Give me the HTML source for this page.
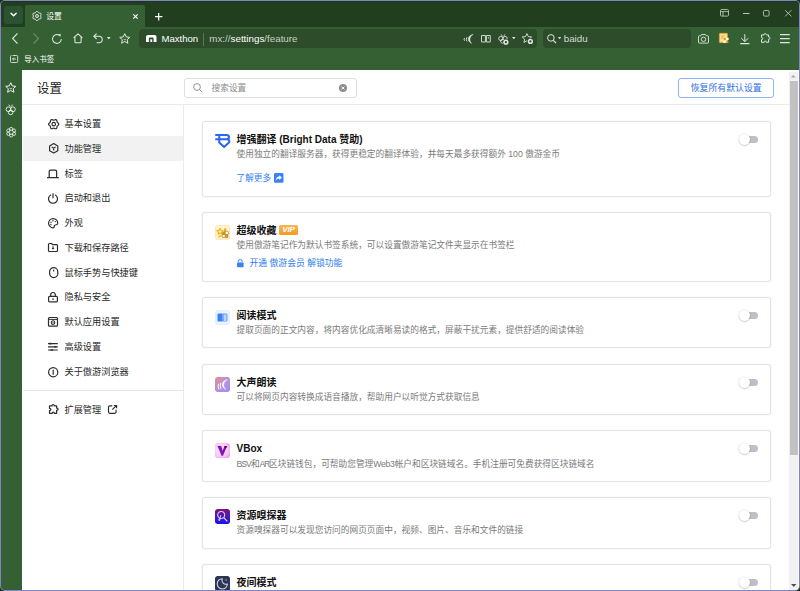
<!DOCTYPE html>
<html lang="zh-CN">
<head>
<meta charset="utf-8">
<title>设置</title>
<style>
*{box-sizing:border-box;margin:0;padding:0}
html,body{width:800px;height:591px;overflow:hidden;background:#12300c}
body{font-family:"Liberation Sans","Noto Sans CJK SC",sans-serif;color:#222;position:relative}
.abs{position:absolute}
svg{position:absolute;overflow:visible;fill:none}
#frame{position:absolute;left:0;top:0;width:800px;height:591px;background:#8384c6;border-radius:5px}
#win{position:absolute;left:1px;top:1px;width:798px;height:589px;background:#356033;border-radius:4px;overflow:hidden}
#tabbar{position:absolute;left:0;top:0;width:798px;height:26px;background:#213f1f;box-shadow:inset 0 1px 0 #1b3714}
#ddbtn{position:absolute;left:3px;top:5px;width:19px;height:18px;border-radius:3px;background:#2b5332}
#tab{position:absolute;left:24px;top:4px;width:120px;height:23px;background:#356033;border-radius:2px 2px 0 0}
.t{position:absolute;white-space:nowrap;line-height:1}
.w{color:#fff}
#addr{position:absolute;left:138px;top:28px;width:398px;height:19px;border-radius:4px;background:#2c4c2a}
#srch{position:absolute;left:542px;top:28px;width:148px;height:19px;border-radius:4px;background:#2c4c2a}
#page{position:absolute;left:21px;top:69px;width:777px;height:520px;background:#fff;overflow:hidden}
#sbtrack{position:absolute;left:767px;top:2px;width:9px;height:518px;background:#f1f1f1}
#sbthumb{position:absolute;left:1px;top:9px;width:8px;height:374px;background:#c1c1c1}
.nav{position:absolute;left:42.5px;font-size:9.2px;color:#2a2a2a;white-space:nowrap;line-height:12px;height:12px}
.card{position:absolute;left:180px;width:569px;border:1px solid #e4e4e4;border-radius:3px;background:#fff;box-shadow:0 0 1.5px rgba(0,0,0,.10)}
.ct{position:absolute;left:33.5px;font-size:10px;font-weight:bold;color:#111;white-space:nowrap;line-height:14px;height:14px}
.cd{position:absolute;left:33.5px;font-size:8.7px;color:#7a7a7a;white-space:nowrap;line-height:12px;height:12px}
.cl{position:absolute;left:33.5px;font-size:8.65px;color:#2f7cf0;white-space:nowrap;line-height:12px;height:12px}
.tg{position:absolute;left:538.5px;width:16.2px;height:7px;border-radius:4px;background:#bcc0c7}
.tg i{position:absolute;left:-2.8px;top:-1.9px;width:10.8px;height:10.8px;border-radius:50%;background:#fff;box-shadow:0 0.4px 1.6px rgba(0,0,0,.38)}
.ic{position:absolute;left:12px;width:15px;height:15px;border-radius:2.5px;overflow:hidden}
</style>
</head>
<body>
<div id="frame"></div>
<div id="win">
<div id="tabbar"></div><div id="ddbtn"></div><div id="tab"></div>
<svg style="left:8.5px;top:11px" width="8" height="6" viewBox="0 0 8 6" ><path d="M1 1.2 L3.6 3.8 L6.2 1.2" stroke="#fff" stroke-width="1.4" stroke-linecap="round" stroke-linejoin="round"/></svg>
<svg style="left:30.9px;top:10px" width="10" height="10" viewBox="0 0 10 10" ><path d="M8.60 5.00 L8.65 5.32 L8.79 5.67 L8.96 6.06 L9.09 6.49 L9.11 6.92 L8.98 7.30 L8.71 7.60 L8.33 7.80 L7.90 7.90 L7.47 7.95 L7.10 8.00 L6.80 8.12 L6.55 8.32 L6.32 8.62 L6.06 8.96 L5.76 9.28 L5.40 9.52 L5.00 9.60 L4.60 9.52 L4.24 9.28 L3.94 8.96 L3.68 8.62 L3.45 8.32 L3.20 8.12 L2.90 8.00 L2.53 7.95 L2.10 7.90 L1.67 7.80 L1.29 7.60 L1.02 7.30 L0.89 6.92 L0.91 6.49 L1.04 6.06 L1.21 5.67 L1.35 5.32 L1.40 5.00 L1.35 4.68 L1.21 4.33 L1.04 3.94 L0.91 3.51 L0.89 3.08 L1.02 2.70 L1.29 2.40 L1.67 2.20 L2.10 2.10 L2.53 2.05 L2.90 2.00 L3.20 1.88 L3.45 1.68 L3.68 1.38 L3.94 1.04 L4.24 0.72 L4.60 0.48 L5.00 0.40 L5.40 0.48 L5.76 0.72 L6.06 1.04 L6.32 1.38 L6.55 1.68 L6.80 1.88 L7.10 2.00 L7.47 2.05 L7.90 2.10 L8.33 2.20 L8.71 2.40 L8.98 2.70 L9.11 3.08 L9.09 3.51 L8.96 3.94 L8.79 4.33 L8.65 4.68 Z" stroke="#f4f7f4" stroke-width="1" stroke-linejoin="round"/><circle cx="5" cy="5" r="1.45" stroke="#f4f7f4" stroke-width="0.95"/></svg>
<div class="t w" style="left:45.3px;top:11.5px;font-size:7.8px">设置</div>
<svg style="left:132.2px;top:12.7px" width="5" height="5" viewBox="0 0 5 5" ><path d="M0.3 0.3 L4.7 4.7 M4.7 0.3 L0.3 4.7" stroke="#fff" stroke-width="1.2"/></svg>
<svg style="left:153.8px;top:11.5px" width="7.4" height="7.4" viewBox="0 0 7.4 7.4" ><path d="M3.7 0 V7.4 M0 3.7 H7.4" stroke="#fff" stroke-width="1.2"/></svg>
<svg style="left:719.2px;top:8.4px" width="9" height="7.6" viewBox="0 0 9 7.6" ><rect x="0.5" y="0.5" width="8" height="6.6" rx="1" stroke="#b9c6b8" stroke-width="0.9"/><path d="M0.5 2.6 H8.5 M3 2.6 V7" stroke="#b9c6b8" stroke-width="0.9"/></svg>
<svg style="left:741.5px;top:12.2px" width="6.5" height="1" viewBox="0 0 6.5 1" ><path d="M0 0.5 H6.5" stroke="#b9c6b8" stroke-width="1"/></svg>
<svg style="left:762.2px;top:9.4px" width="6.6" height="6.6" viewBox="0 0 6.6 6.6" ><rect x="0.5" y="0.5" width="5.6" height="5.6" rx="1.2" stroke="#b9c6b8" stroke-width="0.9"/></svg>
<svg style="left:784px;top:9.4px" width="6.6" height="6.6" viewBox="0 0 6.6 6.6" ><path d="M0.2 0.2 L6.4 6.4 M6.4 0.2 L0.2 6.4" stroke="#b9c6b8" stroke-width="0.9"/></svg>
<svg style="left:11px;top:32px" width="6" height="11" viewBox="0 0 6 11" ><path d="M5.5 0.3 L0.6 5.5 L5.5 10.7" stroke="#dfe7de" stroke-width="1.1"/></svg>
<svg style="left:32px;top:32px" width="6" height="11" viewBox="0 0 6 11" ><path d="M0.5 0.3 L5.4 5.5 L0.5 10.7" stroke="#6e906c" stroke-width="1.1"/></svg>
<svg style="left:51px;top:32.5px" width="10" height="10" viewBox="0 0 10 10" ><path d="M9.3 5 A4.4 4.4 0 1 1 7.3 1.3" stroke="#dfe7de" stroke-width="1.05"/><path d="M6.2 0 L9 0.3 L8.2 3 Z" fill="#dfe7de"/></svg>
<svg style="left:72px;top:32.3px" width="10" height="10.4" viewBox="0 0 10 10.4" ><path d="M0.6 5 L5 0.8 L9.4 5 M1.9 4.2 V8.8 Q1.9 9.8 2.9 9.8 H7.1 Q8.1 9.8 8.1 8.8 V4.2" stroke="#dfe7de" stroke-width="1.05" stroke-linejoin="round"/></svg>
<svg style="left:92px;top:32px" width="10" height="10.5" viewBox="0 0 10 10.5" ><path d="M3.6 0.6 L0.8 3.3 L3.6 6 M0.9 3.3 H6 A3.2 3.2 0 0 1 6 9.7 H3.6" stroke="#dfe7de" stroke-width="1.05"/></svg>
<svg style="left:106.2px;top:35.8px" width="3.6" height="2.4" viewBox="0 0 3.6 2.4" ><path d="M0 0 H3.6 L1.8 2.4 Z" fill="#dfe7de"/></svg>
<svg style="left:117.9px;top:31.7px" width="11.5" height="11" viewBox="0 0 11.5 11" ><path d="M5.75 0.7 L7.25 3.95 L10.8 4.35 L8.15 6.75 L8.9 10.25 L5.75 8.45 L2.6 10.25 L3.35 6.75 L0.7 4.35 L4.25 3.95 Z" stroke="#dfe7de" stroke-width="1" stroke-linejoin="round"/><path d="M4.6 6.3 Q5.75 7.2 6.9 6.3" stroke="#dfe7de" stroke-width="0.8"/></svg>
<div id="addr"></div>
<svg style="left:144.5px;top:33.9px" width="10.5" height="7" viewBox="0 0 10.5 7" ><path d="M0 7 V2 Q0 0 2 0 H8.5 Q10.5 0 10.5 2 V7 H7.6 V3.4 Q7.6 2.6 6.8 2.6 H3.7 Q2.9 2.6 2.9 3.4 V7 Z" fill="#fff"/><rect x="4.3" y="4.3" width="1.9" height="2.7" fill="#fff"/></svg>
<div class="t w" style="left:160.4px;top:33.1px;font-size:9.6px">Maxthon</div>
<div class="abs" style="left:201.5px;top:31.5px;width:1px;height:13px;background:#567854"></div>
<div class="t" style="left:208.3px;top:33px;font-size:9.8px;color:#c5d2c4">mx://<span class="w">settings</span>/feature</div>
<svg style="left:461.5px;top:32.5px" width="10.5" height="9.5" viewBox="0 0 10.5 9.5" ><path d="M10.2 0.3 C4.6 1.6 3.4 6.8 8.6 9.4 C5.8 6.6 6.4 2.8 10.2 0.3 Z" fill="#dfe7de" stroke="#dfe7de" stroke-width="0.5" stroke-linejoin="round"/><path d="M4 3.2 Q2.4 5.2 4 7.4 M1.6 4 Q0.5 5.3 1.6 6.8" stroke="#dfe7de" stroke-width="0.9"/></svg>
<svg style="left:480.2px;top:33.5px" width="9.8" height="7.6" viewBox="0 0 9.8 7.6" ><path d="M0.5 0.5 H4.4 V7 H0.5 Z M5.4 0.5 H9.3 V7 H5.4 Z" stroke="#dfe7de" stroke-width="0.9" stroke-linejoin="round"/><path d="M7.35 2 V3.6" stroke="#dfe7de" stroke-width="0.8"/></svg>
<svg style="left:497px;top:32.5px" width="11" height="10.5" viewBox="0 0 11 10.5" ><path d="M3 0.3 L4.5 2.4 M7 0.3 L5.5 2.4" stroke="#dfe7de" stroke-width="0.8"/><circle cx="2.8" cy="4.5" r="2.1" stroke="#dfe7de" stroke-width="0.9"/><circle cx="7.1" cy="4.5" r="2.1" stroke="#dfe7de" stroke-width="0.9"/><circle cx="4.7" cy="7.2" r="2" stroke="#dfe7de" stroke-width="0.9"/><circle cx="7.9" cy="8.2" r="3.2" fill="#2c4c2a"/><circle cx="7.9" cy="8.2" r="2.6" fill="#dfe7de"/><circle cx="7.9" cy="8.2" r="1.1" fill="#2c4c2a"/></svg>
<svg style="left:511.1px;top:36.1px" width="3.6" height="2.2" viewBox="0 0 3.6 2.2" ><path d="M0 0 H3.6 L1.8 2.2 Z" fill="#dfe7de"/></svg>
<svg style="left:521px;top:32.3px" width="11" height="10.7" viewBox="0 0 11 10.7" ><path d="M4.9 0.6 L6.3 3.6 L9.6 4 L7.2 6.2 L7.85 9.45 L4.9 7.8 L1.95 9.45 L2.6 6.2 L0.2 4 L3.5 3.6 Z" stroke="#dfe7de" stroke-width="0.9" stroke-linejoin="round"/><circle cx="8.4" cy="8.4" r="3.2" fill="#2c4c2a"/><circle cx="8.4" cy="8.4" r="2.6" fill="#dfe7de"/><circle cx="8.4" cy="8.4" r="1.1" fill="#2c4c2a"/></svg>
<div id="srch"></div>
<svg style="left:545.5px;top:32.8px" width="9.5" height="9.5" viewBox="0 0 9.5 9.5" ><circle cx="3.9" cy="3.9" r="3.3" stroke="#dfe7de" stroke-width="1"/><path d="M6.3 6.3 L9 9" stroke="#dfe7de" stroke-width="1.1"/></svg>
<svg style="left:556.6px;top:36.4px" width="3.2" height="2.2" viewBox="0 0 3.2 2.2" ><path d="M0 0 H3.2 L1.6 2.2 Z" fill="#dfe7de"/></svg>
<div class="t" style="left:562.7px;top:33px;font-size:9.8px;color:#d3ddd2">baidu</div>
<svg style="left:697px;top:33px" width="11" height="9.6" viewBox="0 0 11 9.6" ><path d="M0.5 2.6 Q0.5 1.8 1.3 1.8 H2.8 L3.6 0.5 H7.4 L8.2 1.8 H9.7 Q10.5 1.8 10.5 2.6 V8.3 Q10.5 9.1 9.7 9.1 H1.3 Q0.5 9.1 0.5 8.3 Z" stroke="#dfe7de" stroke-width="0.9"/><circle cx="5.5" cy="5.3" r="2.2" stroke="#dfe7de" stroke-width="0.9"/></svg>
<svg style="left:718.3px;top:32.1px" width="11" height="10.5" viewBox="0 0 11 10.5" ><rect x="0.35" y="0.35" width="8.1" height="9.3" rx="0.6" fill="#fde283" stroke="#e59a3c" stroke-width="0.7"/><path d="M1.9 3.2 H5.6 M1.9 5.1 H4.8" stroke="#d9a046" stroke-width="0.8"/><rect x="4.9" y="5.1" width="1.8" height="1.8" fill="#c9861a"/><rect x="7.2" y="4.7" width="2.5" height="2.2" rx="0.4" fill="#fff"/><rect x="4.5" y="7.8" width="2.2" height="2.1" rx="0.4" fill="#fff"/><rect x="7.3" y="7.8" width="2.1" height="1.9" rx="0.3" fill="#f0a010"/></svg>
<svg style="left:739px;top:32.6px" width="9.6" height="10.2" viewBox="0 0 9.6 10.2" ><path d="M4.8 0.2 V7.4 M1.3 4.2 L4.8 7.6 L8.3 4.2" stroke="#dfe7de" stroke-width="1"/><path d="M0.2 9.6 H9.4" stroke="#dfe7de" stroke-width="1.1"/></svg>
<svg style="left:759.3px;top:32.3px" width="11" height="10.5" viewBox="0 0 11 10.5" ><path d="M4.1 1.9 C3.7 0.2 6.6 0.1 6.3 1.9 H8.6 V4.1 C10.4 3.7 10.5 6.6 8.6 6.3 V9.3 H6.3 C6.6 7.6 4 7.6 4.2 9.3 H1.5 V6.6 C3.2 6.9 3.2 4.2 1.5 4.4 V1.9 Z" stroke="#dfe7de" stroke-width="1" stroke-linejoin="round"/></svg>
<svg style="left:779.2px;top:33.2px" width="9.8" height="9.2" viewBox="0 0 9.8 9.2" ><path d="M0 0.6 H9.8 M0 4.6 H9.8 M0 8.6 H9.8" stroke="#dfe7de" stroke-width="1.1"/></svg>
<svg style="left:9.2px;top:54.2px" width="8.2" height="8" viewBox="0 0 8.2 8" ><path d="M2.6 0.5 H6.7 Q7.7 0.5 7.7 1.5 V6.5 Q7.7 7.5 6.7 7.5 H1.5 Q0.5 7.5 0.5 6.5 V1.5 Q0.5 0.5 1.5 0.5" stroke="#dfe7de" stroke-width="0.9"/><path d="M2.6 4 H6 M4 2.5 L2.5 4 L4 5.5" stroke="#dfe7de" stroke-width="0.9"/></svg>
<div class="t w" style="left:23.3px;top:54.6px;font-size:7.5px">导入书签</div>
<svg style="left:4.3px;top:80.6px" width="11.5" height="11" viewBox="0 0 11.5 11" ><path d="M5.75 0.7 L7.25 3.95 L10.8 4.35 L8.15 6.75 L8.9 10.25 L5.75 8.45 L2.6 10.25 L3.35 6.75 L0.7 4.35 L4.25 3.95 Z" stroke="#eef3ed" stroke-width="1" stroke-linejoin="round"/><path d="M4.6 6.3 Q5.75 7.2 6.9 6.3" stroke="#eef3ed" stroke-width="0.8"/></svg>
<svg style="left:4.4px;top:102.6px" width="11.4" height="11.4" viewBox="0 0 11.4 11.4" ><circle cx="3.5" cy="5.3" r="2.4" stroke="#eef3ed" stroke-width="0.9"/><circle cx="7.9" cy="5.3" r="2.4" stroke="#eef3ed" stroke-width="0.9"/><circle cx="5.7" cy="8.4" r="2.3" stroke="#eef3ed" stroke-width="0.9"/><path d="M3.8 0.6 L5.2 2.6 M7.6 0.6 L6.2 2.6" stroke="#eef3ed" stroke-width="0.85"/></svg>
<svg style="left:4.9px;top:125.9px" width="10.4" height="10.4" viewBox="0 0 10.4 10.4" ><circle cx="7.84" cy="6.72" r="1.75" stroke="#eef3ed" stroke-width="0.85"/><circle cx="5.20" cy="8.25" r="1.75" stroke="#eef3ed" stroke-width="0.85"/><circle cx="2.56" cy="6.72" r="1.75" stroke="#eef3ed" stroke-width="0.85"/><circle cx="2.56" cy="3.67" r="1.75" stroke="#eef3ed" stroke-width="0.85"/><circle cx="5.20" cy="2.15" r="1.75" stroke="#eef3ed" stroke-width="0.85"/><circle cx="7.84" cy="3.67" r="1.75" stroke="#eef3ed" stroke-width="0.85"/><circle cx="5.2" cy="5.2" r="2.1" fill="#356033" stroke="#eef3ed" stroke-width="0.9"/></svg>
<div id="page">
<div class="t" style="left:15px;top:13.3px;font-size:12.4px;color:#222">设置</div>
<div class="abs" style="left:162px;top:8px;width:173px;height:20px;border:1px solid #dedede;border-radius:3px"></div>
<svg style="left:171.2px;top:13.2px" width="9.6" height="9.6" viewBox="0 0 9.6 9.6" ><circle cx="4" cy="4" r="3.4" stroke="#8c8c8c" stroke-width="0.95"/><path d="M6.5 6.5 L9.3 9.3" stroke="#8c8c8c" stroke-width="0.95"/></svg>
<div class="t" style="left:189.5px;top:14px;font-size:8.7px;color:#8a8a8a">搜索设置</div>
<svg style="left:316.5px;top:13.7px" width="8" height="8" viewBox="0 0 8 8" ><circle cx="4" cy="4" r="4" fill="#8e8e8e"/><path d="M2.6 2.6 L5.4 5.4 M5.4 2.6 L2.6 5.4" stroke="#fff" stroke-width="0.9"/></svg>
<div class="abs" style="left:656px;top:8px;width:96px;height:20px;border:1px solid #8ab4f5;border-radius:3px"></div>
<div class="t" style="left:668.7px;top:13.5px;font-size:8.9px;color:#2f6fe0">恢复所有默认设置</div>
<div class="abs" style="left:0;top:34px;width:767px;height:1px;background:#ebebeb"></div>
<div class="abs" style="left:161px;top:34px;width:1px;height:490px;background:#ebebeb"></div>
<div class="abs" style="left:1px;top:66px;width:160px;height:25px;background:#f2f2f2"></div>
<div class="nav" style="top:48.2px">基本设置</div>
<div class="nav" style="top:72.8px">功能管理</div>
<div class="nav" style="top:97.8px">标签</div>
<div class="nav" style="top:122.4px">启动和退出</div>
<div class="nav" style="top:147.0px">外观</div>
<div class="nav" style="top:171.8px">下载和保存路径</div>
<div class="nav" style="top:196.5px">鼠标手势与快捷键</div>
<div class="nav" style="top:221.3px">隐私与安全</div>
<div class="nav" style="top:246.0px">默认应用设置</div>
<div class="nav" style="top:270.9px">高级设置</div>
<div class="nav" style="top:296.0px">关于傲游浏览器</div>
<div class="abs" style="left:1px;top:320px;width:160px;height:1px;background:#e6e6e6"></div>
<div class="nav" style="top:333.5px">扩展管理</div>
<svg style="left:25.7px;top:48.65px" width="11.4" height="10.4" viewBox="0 0 11.4 10.4" ><path d="M10.80 5.20 L10.71 5.64 L10.45 6.04 L10.09 6.38 L9.72 6.66 L9.39 6.92 L9.16 7.20 L9.04 7.54 L8.97 7.95 L8.92 8.42 L8.80 8.90 L8.58 9.32 L8.25 9.62 L7.82 9.76 L7.35 9.73 L6.88 9.59 L6.44 9.41 L6.06 9.26 L5.70 9.20 L5.34 9.26 L4.96 9.41 L4.52 9.59 L4.05 9.73 L3.58 9.76 L3.15 9.62 L2.82 9.32 L2.60 8.90 L2.48 8.42 L2.43 7.95 L2.36 7.54 L2.24 7.20 L2.01 6.92 L1.68 6.66 L1.31 6.38 L0.95 6.04 L0.69 5.64 L0.60 5.20 L0.69 4.76 L0.95 4.36 L1.31 4.02 L1.68 3.74 L2.01 3.48 L2.24 3.20 L2.36 2.86 L2.43 2.45 L2.48 1.98 L2.60 1.50 L2.82 1.08 L3.15 0.78 L3.58 0.64 L4.05 0.67 L4.52 0.81 L4.96 0.99 L5.34 1.14 L5.70 1.20 L6.06 1.14 L6.44 0.99 L6.88 0.81 L7.35 0.67 L7.82 0.64 L8.25 0.78 L8.58 1.08 L8.80 1.50 L8.92 1.98 L8.97 2.45 L9.04 2.86 L9.16 3.20 L9.39 3.48 L9.72 3.74 L10.09 4.02 L10.45 4.36 L10.71 4.76 Z" stroke="#2d2d2d" stroke-width="1.2" stroke-linejoin="round"/><circle cx="5.7" cy="5.2" r="1.75" stroke="#2d2d2d" stroke-width="1.2"/></svg>
<svg style="left:26.6px;top:73.0px" width="9.4" height="10.6" viewBox="0 0 9.4 10.6" ><path d="M4.7 0.6 L8.8 2.9 V7.7 L4.7 10 L0.6 7.7 V2.9 Z" stroke="#2d2d2d" stroke-width="1.2" stroke-linejoin="round"/><path d="M2.8 3.9 L4.7 5.2 L6.6 3.9 M4.7 5.2 V7.6" stroke="#2d2d2d" stroke-width="1.15"/></svg>
<svg style="left:25.3px;top:98.5px" width="11.8" height="9.4" viewBox="0 0 11.8 9.4" ><path d="M2.2 8.7 V2.5 Q2.2 1.2 3.5 1.2 H8.3 Q9.6 1.2 9.6 2.5 V8.7" stroke="#2d2d2d" stroke-width="1.25"/><path d="M0 8.75 H11.8" stroke="#2d2d2d" stroke-width="1.25"/></svg>
<svg style="left:26.1px;top:123.0px" width="10" height="10.6" viewBox="0 0 10 10.6" ><path d="M3.1 1.7 A4.5 4.5 0 1 0 6.9 1.7" stroke="#2d2d2d" stroke-width="1.2"/><path d="M5 0.3 V5.2" stroke="#2d2d2d" stroke-width="1.2"/></svg>
<svg style="left:25.9px;top:147.8px" width="10.4" height="10.4" viewBox="0 0 10.4 10.4" ><path d="M5.2 0.6 A4.6 4.6 0 1 0 5.2 9.8 C6.6 9.8 6.1 8.3 6.4 7.6 C6.8 6.6 9.8 7.6 9.8 5.2 A4.6 4.6 0 0 0 5.2 0.6 Z" stroke="#2d2d2d" stroke-width="1.2"/><circle cx="3" cy="4.2" r="0.7" fill="#2d2d2d"/><circle cx="5" cy="2.8" r="0.7" fill="#2d2d2d"/><circle cx="7.3" cy="3.6" r="0.7" fill="#2d2d2d"/><circle cx="2.9" cy="6.5" r="0.7" fill="#2d2d2d"/></svg>
<svg style="left:26.15px;top:173.1px" width="10" height="9" viewBox="0 0 10 9" ><path d="M0.5 1.4 Q0.5 0.5 1.4 0.5 H3.6 L4.6 1.7 H8.6 Q9.5 1.7 9.5 2.6 V7.6 Q9.5 8.5 8.6 8.5 H1.4 Q0.5 8.5 0.5 7.6 Z" stroke="#2d2d2d" stroke-width="1.2" stroke-linejoin="round"/><path d="M5 3.3 V5.2" stroke="#2d2d2d" stroke-width="1.1"/><path d="M3.6 5 H6.4 L5 6.7 Z" fill="#2d2d2d"/></svg>
<svg style="left:26.6px;top:196.9px" width="9.4" height="11.2" viewBox="0 0 9.4 11.2" ><rect x="0.6" y="0.6" width="8.2" height="10" rx="4.1" stroke="#2d2d2d" stroke-width="1.2"/><path d="M4.7 2.6 V4.4" stroke="#2d2d2d" stroke-width="1.1"/></svg>
<svg style="left:26.25px;top:221.8px" width="10" height="10.4" viewBox="0 0 10 10.4" ><rect x="0.6" y="4.3" width="8.8" height="5.6" rx="1" stroke="#2d2d2d" stroke-width="1.2"/><path d="M2.7 4.3 V2.8 A2.3 2.3 0 0 1 7.3 2.8 V4.3" stroke="#2d2d2d" stroke-width="1.2"/><circle cx="5" cy="7.1" r="0.85" fill="#2d2d2d"/></svg>
<svg style="left:26.3px;top:247.2px" width="10" height="9.6" viewBox="0 0 10 9.6" ><rect x="0.5" y="0.5" width="9" height="8.6" rx="0.9" stroke="#2d2d2d" stroke-width="1.2"/><path d="M0.5 2.4 H9.5" stroke="#2d2d2d" stroke-width="1"/><circle cx="5" cy="5.6" r="1.8" stroke="#2d2d2d" stroke-width="1.1"/><circle cx="5" cy="5.6" r="0.6" fill="#2d2d2d"/></svg>
<svg style="left:26.2px;top:273.0px" width="9.8" height="7.6" viewBox="0 0 9.8 7.6" ><path d="M0 0.6 H9.8 M0 3.8 H9.8 M0 7 H9.8" stroke="#2d2d2d" stroke-width="1.2"/><path d="M1.4 0.6 H3.4 M6.2 3.8 H8.4 M2.6 7 H5" stroke="#2d2d2d" stroke-width="1.6"/></svg>
<svg style="left:26.1px;top:296.8px" width="10.4" height="10.4" viewBox="0 0 10.4 10.4" ><circle cx="5.2" cy="5.2" r="4.6" stroke="#2d2d2d" stroke-width="1.2"/><path d="M5.2 2.7 V7.7" stroke="#2d2d2d" stroke-width="1.2"/></svg>
<svg style="left:25.9px;top:334.25px" width="11" height="10.5" viewBox="0 0 11 10.5" ><path d="M4.1 1.9 C3.7 0.2 6.6 0.1 6.3 1.9 H8.6 V4.1 C10.4 3.7 10.5 6.6 8.6 6.3 V9.3 H6.3 C6.6 7.6 4 7.6 4.2 9.3 H1.5 V6.6 C3.2 6.9 3.2 4.2 1.5 4.4 V1.9 Z" stroke="#2d2d2d" stroke-width="1.2" stroke-linejoin="round"/></svg>
<svg style="left:86.45px;top:335.3px" width="9.2" height="8.8" viewBox="0 0 9.2 8.8" ><path d="M4.2 0.9 H2 Q0.5 0.9 0.5 2.4 V6.8 Q0.5 8.3 2 8.3 H6.6 Q8.1 8.3 8.1 6.8 V4.8" stroke="#2d2d2d" stroke-width="1.2"/><path d="M4.3 4.6 L8.4 0.6 M5.8 0.5 H8.6 V3.3" stroke="#2d2d2d" stroke-width="1.2"/></svg>
<div class="card" style="top:51px;height:76px"><svg style="left:7px;top:8px" width="24" height="20" viewBox="0 0 24 20"><path d="M5.25 4.9 H16.4 Q19 4.9 19 7.05 Q19 9.2 16.6 9.2 M5.25 9.2 H16.8 Q19.3 9.2 19.3 11.2 Q19.3 12.3 18.4 13.1 L14.06 17.1 L9.25 12.6 V4.9" stroke="#2a66f4" stroke-width="2.05" stroke-linejoin="round"/></svg><div class="ct" style="top:10.7px">增强翻译 (Bright Data 赞助)</div><div class="cd" style="top:25.7px">使用独立的翻译服务器，获得更稳定的翻译体验，并每天最多获得额外 100 傲游金币</div><div class="cl" style="top:49.6px">了解更多</div><svg style="left:70.7px;top:51px" width="9.5" height="9.8" viewBox="0 0 9.5 9.8"><rect width="9.5" height="9.8" rx="1.4" fill="#3a82f3"/><path d="M5.3 2.2 L8 4.6 L5.3 7 V5.6 Q3 5.4 1.8 7.4 Q2.2 3.9 5.3 3.6 Z" fill="#fff"/></svg><div class="tg" style="top:13.7px"><i></i></div></div>
<div class="card" style="top:142px;height:70px"><svg class="ic" style="left:12.2px;top:11.9px" width="15" height="15" viewBox="0 0 15 15"><rect width="15" height="15" rx="2.5" fill="#fdeab0"/><rect x="1.2" y="1.2" width="12.6" height="12.6" rx="1.8" fill="#fff6d8"/><path d="M5 3.3 L5.95 5.3 L8.1 5.55 L6.5 7.05 L6.95 9.2 L5 8.1 L3.05 9.2 L3.5 7.05 L1.9 5.55 L4.05 5.3 Z" fill="#fff3c4" stroke="#f4b20a" stroke-width="1.15" stroke-linejoin="round"/><rect x="9" y="3.3" width="2.3" height="4" rx="0.6" fill="#f4b20a"/><path d="M3 12.4 Q3.2 10.3 5.6 10.3 Q6.9 10.4 6.8 11.4 Q5 11.3 4.2 12.6 Z" fill="#f4b20a"/><rect x="10" y="6.3" width="3.3" height="3.3" rx="0.7" fill="#fff" stroke="#a8731c" stroke-width="0.7"/><rect x="10.2" y="9.9" width="2.7" height="2.7" rx="0.6" fill="#f0a808" stroke="#a8731c" stroke-width="0.7"/><rect x="7.2" y="9.5" width="3" height="3" rx="0.6" fill="#fff" stroke="#a8731c" stroke-width="0.7"/><rect x="7.6" y="7" width="2.3" height="2.3" rx="0.5" fill="#e9a010" stroke="#a8731c" stroke-width="0.6"/></svg><div class="ct" style="top:10.7px">超级收藏</div><div class="abs" style="left:75.8px;top:12.2px;width:19.4px;height:9.6px;border-radius:1.5px;background:linear-gradient(180deg,#f9b655,#f59a23);color:#fff;font-size:8px;font-weight:bold;font-style:italic;line-height:9.8px;text-align:center;letter-spacing:-0.2px">VIP</div><div class="cd" style="top:26px">使用傲游笔记作为默认书签系统，可以设置傲游笔记文件夹显示在书签栏</div><svg style="left:34.3px;top:45.5px" width="6.6" height="8.2" viewBox="0 0 6.6 8.2"><rect x="0" y="3.4" width="6.6" height="4.8" rx="0.8" fill="#3b82f6"/><path d="M1.4 3.6 V2.4 A1.9 1.9 0 0 1 5.2 2.4 V3.6" stroke="#3b82f6" stroke-width="1"/></svg><div class="cl" style="left:46.5px;top:43.8px;font-size:8.8px">开通 傲游会员 解锁功能</div></div>
<div class="card" style="top:227px;height:51px"><svg class="ic" style="left:12.2px;top:11.9px" width="15" height="15" viewBox="0 0 15 15"><rect width="15" height="15" rx="2.5" fill="#e4eefc"/><rect x="1.3" y="1.3" width="12.4" height="12.4" rx="1.6" fill="#ecf3fd"/><path d="M2.5 4.4 Q2.5 3.4 3.5 3.4 H7.7 V11.5 H3.5 Q2.5 11.5 2.5 10.5 Z" fill="#3b82f6"/><path d="M7.7 3.4 H11.2 Q12.5 3.4 12.5 4.7 V10.2 Q12.5 11.5 11.2 11.5 H7.7 Z" fill="#6aa3f8"/><rect x="8.7" y="4.4" width="2.8" height="5.2" rx="1" fill="#b9d4fb"/><rect x="8.9" y="9.6" width="2.4" height="0.9" fill="#f4f8fe"/></svg><div class="ct" style="top:10.7px">阅读模式</div><div class="cd" style="top:26px">提取页面的正文内容，将内容优化成清晰易读的格式，屏蔽干扰元素，提供舒适的阅读体验</div><div class="tg" style="top:13.7px"><i></i></div></div>
<div class="card" style="top:294px;height:51px"><svg class="ic" style="left:12.2px;top:11.5px" width="15" height="15" viewBox="0 0 15 15"><defs><linearGradient id="g4" x1="0" y1="0" x2="1" y2="1"><stop offset="0" stop-color="#e39088"/><stop offset="0.5" stop-color="#b892d6"/><stop offset="1" stop-color="#a08bf8"/></linearGradient></defs><rect width="15" height="15" rx="2" fill="url(#g4)"/><path d="M12.3 2.7 C7 3 5.2 9.6 10.7 12.4 C7.8 9.6 8 4.6 12.3 2.7 Z" fill="#fff" stroke="#fff" stroke-width="0.5" stroke-linejoin="round"/><path d="M5.7 6.3 Q4.2 9 5.9 11.7 M3.5 7 Q2.3 9.4 3.7 11.9" stroke="#fff" stroke-width="0.95" stroke-linecap="round"/></svg><div class="ct" style="top:10.7px">大声朗读</div><div class="cd" style="top:26px">可以将网页内容转换成语音播放，帮助用户以听觉方式获取信息</div><div class="tg" style="top:13.7px"><i></i></div></div>
<div class="card" style="top:360px;height:52px"><svg class="ic" style="left:12.2px;top:11.5px" width="15" height="15" viewBox="0 0 15 15"><defs><radialGradient id="g5" cx="0.4" cy="0.45" r="0.75"><stop offset="0" stop-color="#fdeefc"/><stop offset="0.6" stop-color="#f8c8f7"/><stop offset="1" stop-color="#ee9af0"/></radialGradient><linearGradient id="g5b" x1="0" y1="0" x2="1" y2="0"><stop offset="0" stop-color="#7a12d0"/><stop offset="0.55" stop-color="#8a14c4"/><stop offset="1" stop-color="#7a0a70"/></linearGradient></defs><rect width="15" height="15" rx="2" fill="url(#g5)"/><path d="M2.5 3.1 H6.3 L7.7 7.8 L9.4 3.1 H12 L8 12.7 H6.5 Z" fill="url(#g5b)"/><path d="M9.4 3.1 H12 L10.9 5.8 Z" fill="#4a0a52"/></svg><div class="ct" style="top:11.3px">VBox</div><div class="cd" style="top:26.5px"><span style="letter-spacing:-1px">BSV</span>和<span style="letter-spacing:-1.3px">AR</span>区块链钱包，可帮助您管理<span style="letter-spacing:-0.3px">Web3</span>帐户和区块链域名。手机注册可免费获得区块链域名</div><div class="tg" style="top:13.7px"><i></i></div></div>
<div class="card" style="top:427px;height:52px"><svg class="ic" style="left:12.2px;top:11.3px" width="15" height="15" viewBox="0 0 15 15"><defs><linearGradient id="g6" x1="0" y1="0" x2="0" y2="1"><stop offset="0" stop-color="#821278"/><stop offset="0.5" stop-color="#4a1ab8"/><stop offset="1" stop-color="#1212f2"/></linearGradient></defs><rect width="15" height="15" rx="2" fill="url(#g6)"/><circle cx="6.2" cy="6" r="3.6" stroke="#e8e2f8" stroke-width="1"/><path d="M8.8 8.7 L12.3 12.3" stroke="#e8e2f8" stroke-width="1.1"/><path d="M5.8 6.2 L4.4 10.6" stroke="#e8e2f8" stroke-width="0.9"/><path d="M2.5 10.4 H6.2 L4.2 12 Z" fill="#e8e2f8"/></svg><div class="ct" style="top:10.7px">资源嗅探器</div><div class="cd" style="top:26px">资源嗅探器可以发现您访问的网页页面中，视频、图片、音乐和文件的链接</div><div class="tg" style="top:13.7px"><i></i></div></div>
<div class="card" style="top:494px;height:52px"><svg class="ic" style="left:12.2px;top:11.4px" width="15" height="15" viewBox="0 0 15 15"><rect width="15" height="15" rx="2" fill="#2c3552"/><path d="M7.3 2.7 A5.1 5.1 0 1 0 12.4 8 A4 4 0 0 1 7.3 2.7 Z" stroke="#d4d8e4" stroke-width="1.05" stroke-linejoin="round"/><circle cx="11" cy="3.9" r="0.65" fill="#d4d8e4"/></svg><div class="ct" style="top:10.7px">夜间模式</div><div class="tg" style="top:13.7px"><i></i></div></div>
<div id="sbtrack"><div id="sbthumb"></div>
<svg style="left:2.2px;top:3px" width="4.6" height="2.6" viewBox="0 0 4.6 2.6" ><path d="M0 2.6 L2.3 0 L4.6 2.6 Z" fill="#a3a3a3"/></svg>
<svg style="left:1.8px;top:511.5px" width="5.4" height="3" viewBox="0 0 5.4 3" ><path d="M0 0 L2.7 3 L5.4 0 Z" fill="#505050"/></svg>
</div>
</div>
</div>
</body>
</html>
